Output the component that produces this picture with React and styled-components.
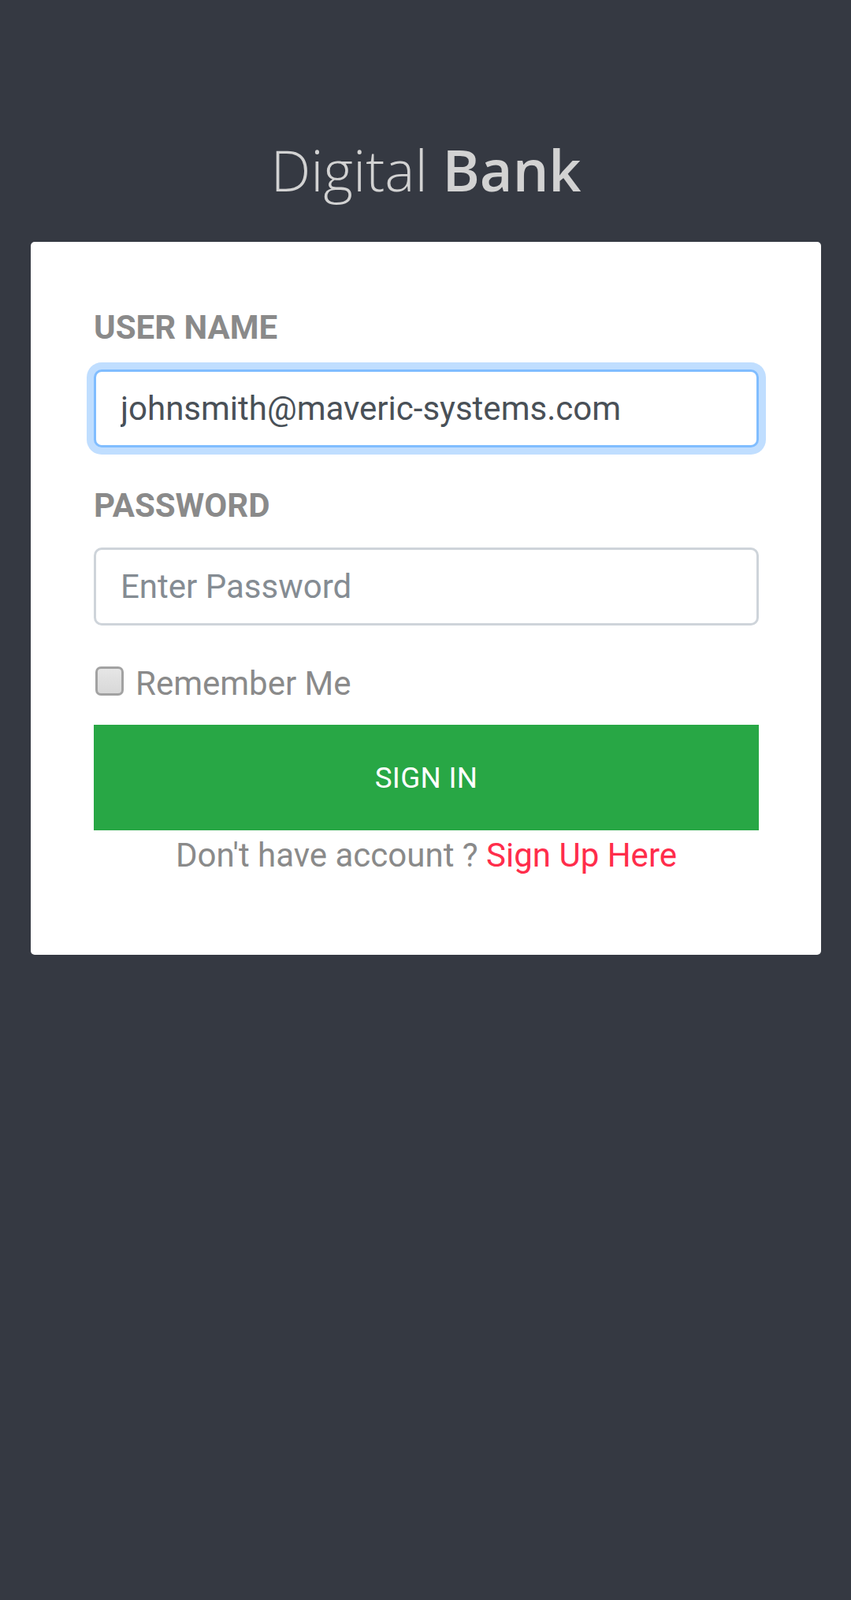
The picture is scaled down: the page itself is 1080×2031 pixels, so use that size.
import React from 'react'
import styled, { createGlobalStyle } from 'styled-components'

const GlobalStyle = createGlobalStyle`
  html, body {
    margin: 0;
    padding: 0;
    background: #353942;
  }
  * { box-sizing: border-box; }
`

const Page = styled.div`
  min-height: 2031px;
  background: #353942;
  padding: 179px 38px 0 39px;
  font-family: Roboto, "Liberation Sans", sans-serif;
`

const Logo = styled.div`
  font-family: "Open Sans", "Liberation Sans", sans-serif;
  font-size: 72px;
  line-height: 73px;
  text-align: center;
  color: #d2d2d2;
  margin-bottom: 55px;
  filter: blur(0.4px);
`

const LogoLight = styled.span`
  font-weight: 300;
`

const LogoBold = styled.span`
  font-weight: 600;
`

const Card = styled.div`
  background: #fff;
  border-radius: 5px;
  padding: 77px 79px 95px 80px;
`

const FormGroup = styled.div`
  margin-bottom: 42px;
`

const Label = styled.label`
  display: block;
  font-size: 42px;
  line-height: 63px;
  font-weight: 700;
  color: #8a8a8a;
  margin-bottom: 22px;
`

const Input = styled.input`
  display: block;
  width: 100%;
  height: 99px;
  padding: 0 31px;
  font-family: Roboto, "Liberation Sans", sans-serif;
  font-size: 42px;
  color: #495057;
  background: #fff;
  border: 3px solid ${p => (p.$focused ? '#80bdff' : '#ced4da')};
  border-radius: 10px;
  outline: none;
  box-shadow: ${p => (p.$focused ? '0 0 0 9px #c0deff' : 'none')};

  &::placeholder {
    color: #858c93;
  }
`

const CheckRow = styled.label`
  display: flex;
  align-items: center;
  font-size: 42px;
  line-height: 63px;
  color: #8a8a8a;
  margin-bottom: 21px;
`

const Check = styled.span`
  display: inline-block;
  width: 36px;
  height: 37px;
  margin: 0 15px 6px 2px;
  border: 3px solid #a2a2a2;
  border-radius: 7px;
  background: linear-gradient(#e6e6e6, #d8d8d8);
`

const Button = styled.button`
  display: block;
  width: 100%;
  height: 134px;
  border: none;
  border-radius: 0;
  background: #28a745;
  color: #fff;
  font-family: Roboto, "Liberation Sans", sans-serif;
  font-size: 36.75px;
  letter-spacing: 0.3px;
`

const SignUpLine = styled.p`
  margin: 0;
  text-align: center;
  font-size: 42px;
  line-height: 63px;
  color: #8a8a8a;
`

const SignUpLink = styled.a`
  color: #ff2d4b;
  text-decoration: none;
`

export default function App() {
  return (
    <Page>
      <GlobalStyle />
      <Logo>
        <LogoLight>Digital</LogoLight> <LogoBold>Bank</LogoBold>
      </Logo>
      <Card>
        <FormGroup>
          <Label>USER NAME</Label>
          <Input $focused defaultValue="johnsmith@maveric-systems.com" />
        </FormGroup>
        <FormGroup>
          <Label>PASSWORD</Label>
          <Input type="password" placeholder="Enter Password" />
        </FormGroup>
        <CheckRow>
          <Check />
          Remember Me
        </CheckRow>
        <Button>SIGN IN</Button>
        <SignUpLine>
          Don't have account ? <SignUpLink href="#">Sign Up Here</SignUpLink>
        </SignUpLine>
      </Card>
    </Page>
  )
}
